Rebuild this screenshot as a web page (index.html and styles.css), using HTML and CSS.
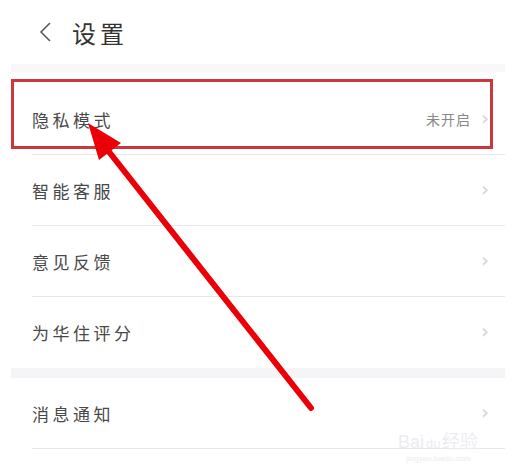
FILE: index.html
```html
<!DOCTYPE html>
<html lang="zh-CN">
  <head>
    <meta charset="UTF-8" />
    <meta name="viewport" content="width=device-width, initial-scale=1.0" />
    <title>设置</title>
    <link rel="stylesheet" href="styles.css">
  </head>
  <body>
    <div class="page">
      <div class="header">
        <span class="back">
          <svg width="14" height="20" viewBox="0 0 14 20">
            <path d="M12 1 L3 10 L12 19" fill="none" stroke="#555" stroke-width="1.5" />
          </svg>
        </span>
        <span class="title">设置</span>
      </div>

      <div class="band band-top"></div>
      <div class="group">
        <div class="row first">
          <span class="label">隐私模式</span>
          <span class="value">未开启</span>
          <span class="chevron">›</span>
        </div>
        <div class="row">
          <span class="label">智能客服</span>
          <span class="chevron">›</span>
        </div>
        <div class="row">
          <span class="label">意见反馈</span>
          <span class="chevron">›</span>
        </div>
        <div class="row last">
          <span class="label">为华住评分</span>
          <span class="chevron">›</span>
        </div>
      </div>

      <div class="band"></div>
      <div class="group">
        <div class="row">
          <span class="label">消息通知</span>
          <span class="chevron">›</span>
        </div>
        <div class="row tail"></div>
      </div>

      <div class="watermark">
        <div class="wm-logo">Bai<span class="wm-du">du</span>经验</div>
        <div class="wm-url">jingyan.baidu.com</div>
      </div>

      <!-- annotation drawn over the screenshot -->
      <svg class="annotation" width="530" height="474" viewBox="0 0 530 474">
        <rect x="12.5" y="80.5" width="479" height="67" fill="none" stroke="#c9383d" stroke-width="3" />
        <line x1="311" y1="408" x2="106" y2="148" stroke="#ec0008" stroke-width="6" stroke-linecap="round" />
        <polygon points="88,123 121,143 99,160" fill="#ec0008" />
      </svg>
    </div>
  </body>
</html>
```

FILE: styles.css
```css
body {
  margin: 0;
  background-color: #fff;
  font-family: "Noto Sans CJK SC", "Noto Sans", sans-serif;
  color: #444;
}

.page {
  position: relative;
  width: 530px;
  height: 474px;
  overflow: hidden;
}

.header {
  height: 64px;
  display: flex;
  align-items: center;
  padding-left: 38px;
}

.back {
  display: flex;
  align-items: center;
  margin-right: 20px;
  margin-top: 0;
}

.title {
  font-size: 24px;
  color: #333;
  letter-spacing: 4px;
  margin-top: 0;
}

.band {
  margin: 0 25px 0 11px;
  height: 10px;
  background-color: #f5f5f8;
}

.band-top {
  height: 8px;
  background-color: #f8f8fa;
}

.group {
  margin: 0 25px 0 11px;
}

.row {
  height: 71px;
  display: flex;
  align-items: center;
  margin-left: 21px;
  border-bottom: 1px solid #e8e8ec;
  box-sizing: border-box;
}

.row.first {
  height: 83px;
  padding-top: 12px;
}

.row.last {
  border-bottom: none;
}

.label {
  flex: 1;
  font-size: 17px;
  letter-spacing: 3.5px;
  color: #484848;
}

.value {
  font-size: 14px;
  color: #888;
  letter-spacing: 1px;
  margin-right: 10px;
}

.chevron {
  font-family: "DejaVu Sans", sans-serif;
  font-size: 20px;
  color: #d4d4d8;
  margin-right: 16px;
  margin-top: -3px;
}

.row.tail {
  border-bottom: none;
}

.watermark {
  position: absolute;
  left: 398px;
  top: 432px;
  color: #ececf0;
  text-align: center;
}

.wm-logo {
  font-family: "Liberation Sans", sans-serif;
  font-size: 18px;
  line-height: 20px;
}

.wm-du {
  font-size: 13px;
  margin: 0 2px;
}

.wm-url {
  font-family: "Liberation Sans", sans-serif;
  font-size: 8px;
}

.annotation {
  position: absolute;
  left: 0;
  top: 0;
}
```
